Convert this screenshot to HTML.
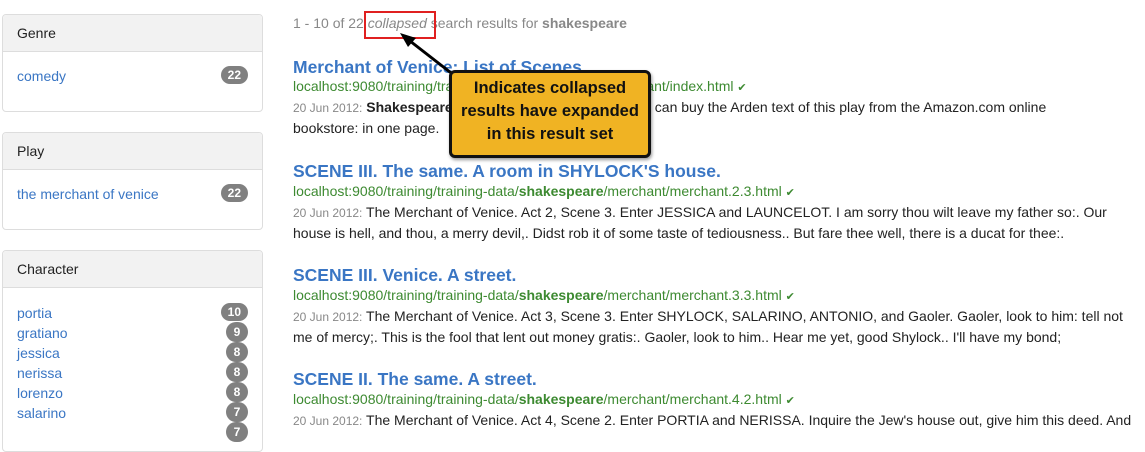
<!DOCTYPE html>
<html><head><style>
body{margin:0;width:1145px;height:423px;overflow:hidden;background:#fff;font-family:"Liberation Sans",sans-serif;position:relative}
.p{position:absolute;left:2px;width:259px;border:1px solid #ddd;border-radius:4px;background:#fff}
.ph{height:36px;background:#f2f2f2;border-bottom:1px solid #ddd;font-size:14px;color:#222;line-height:36px;padding-left:14px;border-radius:4px 4px 0 0}
.it{position:absolute;left:14px;font-size:14px;color:#3a76c4}
.b{position:absolute;right:14px;background:#808080;color:#fff;font-size:12px;font-weight:bold;border-radius:9px;height:18px;line-height:18px;min-width:12px;padding:0 7px;text-align:center}
.b1{padding:0 4px;min-width:14px;border-radius:10px;height:20px;line-height:20px}
.ab{position:absolute;left:293px;white-space:nowrap}
.t{font-size:17.5px;font-weight:bold;color:#3a76c4}
.u{font-size:14px;color:#3d8a31}
.s{font-size:14px;color:#222}
.d{font-size:12px;color:#888}
</style></head><body>
<div class="p" style="top:14px;height:96px"><div class="ph">Genre</div>
<span class="it" style="top:53px">comedy</span><span class="b" style="top:51px">22</span></div>
<div class="p" style="top:132px;height:96px"><div class="ph">Play</div>
<span class="it" style="top:53px">the merchant of venice</span><span class="b" style="top:51px">22</span></div>
<div class="p" style="top:250px;height:200px"><div class="ph">Character</div>
<span class="it" style="top:54px">portia</span><span class="b" style="top:52px">10</span>
<span class="it" style="top:74px">gratiano</span><span class="b b1" style="top:71px">9</span>
<span class="it" style="top:94px">jessica</span><span class="b b1" style="top:91px">8</span>
<span class="it" style="top:114px">nerissa</span><span class="b b1" style="top:111px">8</span>
<span class="it" style="top:134px">lorenzo</span><span class="b b1" style="top:131px">8</span>
<span class="it" style="top:154px">salarino</span><span class="b b1" style="top:151px">7</span>
<span class="b b1" style="top:171px">7</span>
</div>

<div class="ab" style="top:15px;font-size:14px;color:#888">1 - 10 of 22 <i>collapsed</i> search results for <b>shakespeare</b></div>

<div class="ab t" style="top:57px">Merchant of Venice: List of Scenes</div>
<div class="ab u" style="top:78px">localhost:9080/training/training-data/<b>shakespeare</b>/merchant/index.html <span style="font-size:11px">&#10004;</span></div>
<div class="ab s" style="top:99px"><span class="d">20 Jun 2012:</span> <b>Shakespeare</b> ... The Merchant of Venice. You can buy the Arden text of this play from the Amazon.com online</div>
<div class="ab s" style="top:120px">bookstore: in one page.</div>

<div class="ab t" style="top:161px">SCENE III. The same. A room in SHYLOCK'S house.</div>
<div class="ab u" style="top:183px">localhost:9080/training/training-data/<b>shakespeare</b>/merchant/merchant.2.3.html <span style="font-size:11px">&#10004;</span></div>
<div class="ab s" style="top:204px"><span class="d">20 Jun 2012:</span> The Merchant of Venice. Act 2, Scene 3. Enter JESSICA and LAUNCELOT. I am sorry thou wilt leave my father so:. Our</div>
<div class="ab s" style="top:225px">house is hell, and thou, a merry devil,. Didst rob it of some taste of tediousness.. But fare thee well, there is a ducat for thee:.</div>

<div class="ab t" style="top:265px">SCENE III. Venice. A street.</div>
<div class="ab u" style="top:287px">localhost:9080/training/training-data/<b>shakespeare</b>/merchant/merchant.3.3.html <span style="font-size:11px">&#10004;</span></div>
<div class="ab s" style="top:308px"><span class="d">20 Jun 2012:</span> The Merchant of Venice. Act 3, Scene 3. Enter SHYLOCK, SALARINO, ANTONIO, and Gaoler. Gaoler, look to him: tell not</div>
<div class="ab s" style="top:329px">me of mercy;. This is the fool that lent out money gratis:. Gaoler, look to him.. Hear me yet, good Shylock.. I'll have my bond;</div>

<div class="ab t" style="top:369px">SCENE II. The same. A street.</div>
<div class="ab u" style="top:391px">localhost:9080/training/training-data/<b>shakespeare</b>/merchant/merchant.4.2.html <span style="font-size:11px">&#10004;</span></div>
<div class="ab s" style="top:412px"><span class="d">20 Jun 2012:</span> The Merchant of Venice. Act 4, Scene 2. Enter PORTIA and NERISSA. Inquire the Jew's house out, give him this deed. And</div>

<div style="position:absolute;left:364px;top:11px;width:68px;height:24px;border:2px solid #e02020"></div>
<svg style="position:absolute;left:0;top:0" width="1145" height="423"><line x1="455" y1="76" x2="410" y2="41" stroke="#000" stroke-width="3"/><polygon points="400,33 416,38 408,47" fill="#000"/></svg>
<div style="position:absolute;left:449px;top:70px;width:196px;height:78px;background:#f0b323;border:3px solid #111;border-radius:6px;box-shadow:1px 2px 3px rgba(0,0,0,.4);font-size:16.5px;font-weight:bold;color:#111;text-align:center;line-height:23px;padding-top:4px;box-sizing:content-box">Indicates collapsed<br>results have expanded<br>in this result set</div>
</body></html>
